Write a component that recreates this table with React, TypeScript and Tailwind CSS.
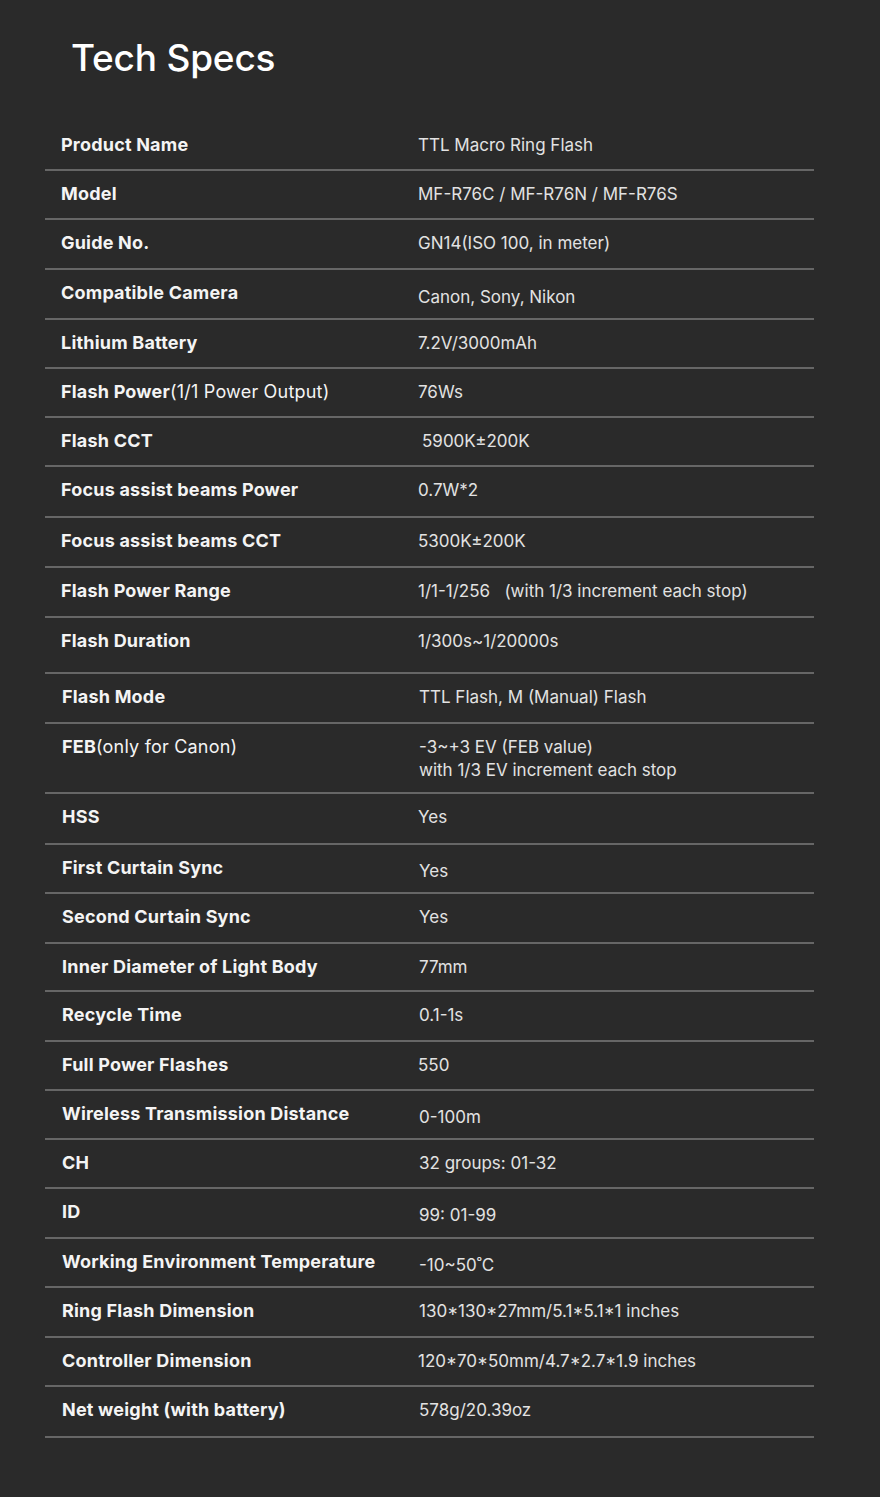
import React from "react";

type Row = {
  label: React.ReactNode;
  value: React.ReactNode;
  h: number;
  vx?: number;
  vy?: number;
  lx?: number;
};

const rows: Row[] = [
  { label: "Product Name", value: "TTL Macro Ring Flash", h: 49 },
  { label: "Model", value: "MF-R76C / MF-R76N / MF-R76S", h: 49 },
  { label: "Guide No.", value: "GN14(ISO 100, in meter)", h: 50 },
  { label: "Compatible Camera", value: "Canon, Sony, Nikon", h: 50, vy: 4 },
  { label: "Lithium Battery", value: "7.2V/3000mAh", h: 49 },
  {
    label: (
      <>
        <span className="font-bold">Flash Power</span>
        <span className="font-normal">(1/1 Power Output)</span>
      </>
    ),
    value: "76Ws",
    h: 49,
  },
  { label: "Flash CCT", value: "5900K±200K", h: 49, vx: 4 },
  { label: "Focus assist beams Power", value: "0.7W*2", h: 51, vx: -2 },
  { label: "Focus assist beams CCT", value: "5300K±200K", h: 50 },
  { label: "Flash Power Range", value: "1/1-1/256   (with 1/3 increment each stop)", h: 50 },
  { label: "Flash Duration", value: "1/300s~1/20000s", h: 56, vx: -3 },
  { label: "Flash Mode", value: "TTL Flash, M (Manual) Flash", h: 50, vx: 1, lx: 1 },
  {
    label: (
      <>
        <span className="font-bold">FEB</span>
        <span className="font-normal">(only for Canon)</span>
      </>
    ),
    value: (
      <>
        -3~+3 EV (FEB value)
        <br />
        with 1/3 EV increment each stop
      </>
    ),
    h: 70,
    vx: 1,
    lx: 1,
  },
  { label: "HSS", value: "Yes", h: 51, lx: 1, vx: -1 },
  { label: "First Curtain Sync", value: "Yes", h: 49, lx: 1, vx: 1, vy: 3 },
  { label: "Second Curtain Sync", value: "Yes", h: 50, lx: 1, vx: 1 },
  { label: "Inner Diameter of Light Body", value: "77mm", h: 48, lx: 1, vx: 1 },
  { label: "Recycle Time", value: "0.1-1s", h: 50, lx: 1, vx: 1 },
  { label: "Full Power Flashes", value: "550", h: 49, lx: 1, vx: -2 },
  { label: "Wireless Transmission Distance", value: "0-100m", h: 49, lx: 1, vx: 1, vy: 3 },
  { label: "CH", value: "32 groups: 01-32", h: 49, lx: 1, vx: 1 },
  { label: "ID", value: "99: 01-99", h: 50, lx: 1, vx: 1, vy: 3 },
  { label: "Working Environment Temperature", value: "-10~50˚C", h: 49, lx: 1, vx: 1, vy: 3 },
  { label: "Ring Flash Dimension", value: "130*130*27mm/5.1*5.1*1 inches", h: 50, lx: 1, vx: 1 },
  { label: "Controller Dimension", value: "120*70*50mm/4.7*2.7*1.9 inches", h: 49, lx: 1, vx: -2 },
  { label: "Net weight (with battery)", value: "578g/20.39oz", h: 51, lx: 1, vx: 1 },
];

export default function App() {
  return (
    <div
      className="min-h-[1497px] w-full bg-[#2a2a2a] text-white"
      style={{ fontFamily: "Inter, 'Noto Sans', 'Liberation Sans', sans-serif" }}
    >
      <div className="pl-[71px] pt-[35px] pb-[41px]">
        <h1 className="text-[37px] leading-[46px] font-medium tracking-[-0.2px] text-white">
          Tech Specs
        </h1>
      </div>
      <div className="ml-[45px] w-[769px] flex flex-col">
        {rows.map((r, i) => (
          <div
            key={i}
            className="flex items-start border-b-2 border-[#666666] box-border"
            style={{ height: r.h }}
          >
            <div
              className="w-[373px] shrink-0 pt-[11px] text-[18px] leading-[24px] font-bold tracking-[0.2px] text-[#f4f4f4]"
              style={{ paddingLeft: 16 + (r.lx ?? 0) }}
            >
              {r.label}
            </div>
            <div
              className="text-[17px] leading-[23px] font-normal text-[#e2e2e2] whitespace-pre"
              style={{ paddingLeft: r.vx ?? 0, paddingTop: 12 + (r.vy ?? 0) }}
            >
              {r.value}
            </div>
          </div>
        ))}
      </div>
    </div>
  );
}
